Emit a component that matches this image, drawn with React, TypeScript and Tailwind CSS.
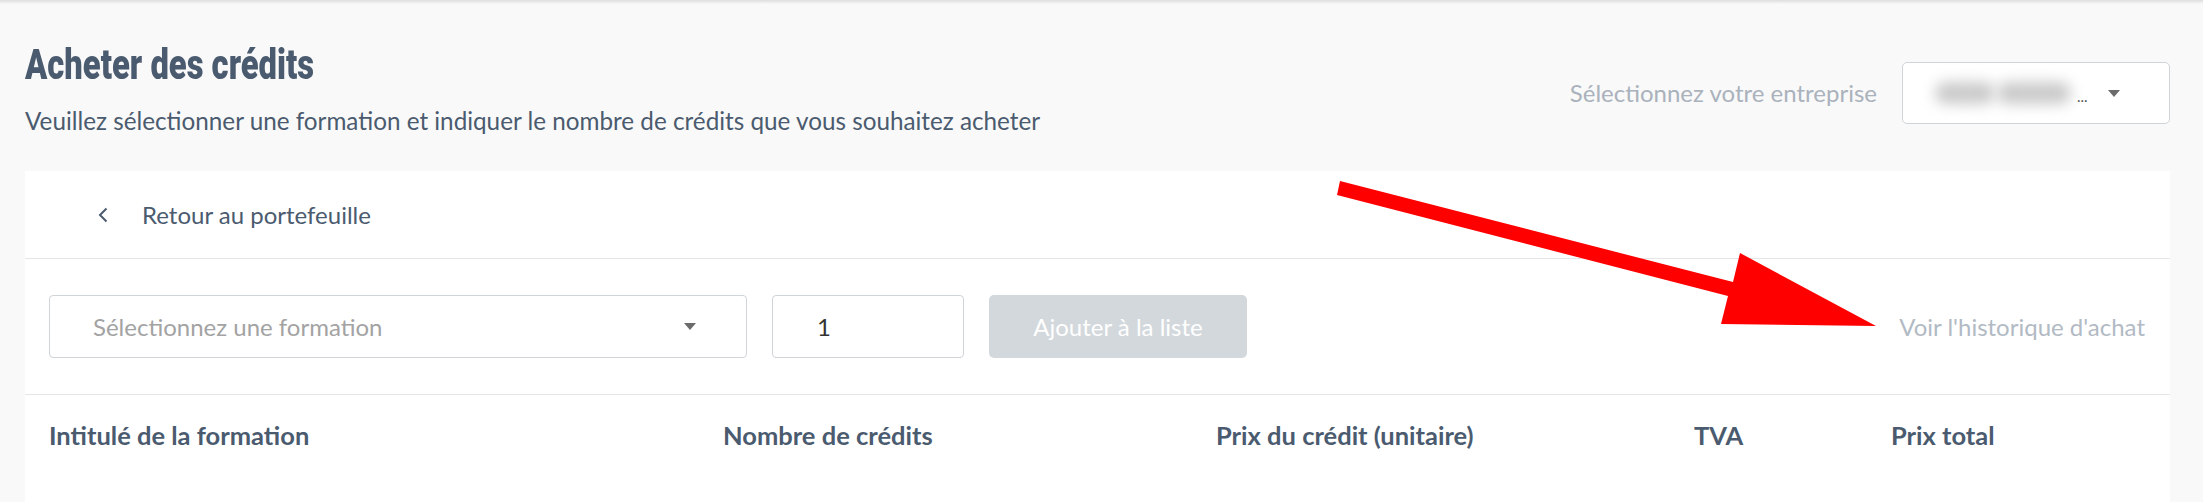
const columns = [
  "Intitulé de la formation",
  "Nombre de crédits",
  "Prix du crédit (unitaire)",
  "TVA",
  "Prix total",
];

const Caret = ({ className }: { className?: string }) => (
  <svg width="12" height="7" viewBox="0 0 12 7" className={className}>
    <polygon points="0,0 12,0 6,7" fill="currentColor" />
  </svg>
);

const CompanySelect = () => (
  <div className="flex items-center gap-[25px] mt-[18px]">
    <span className="font-['Lato',sans-serif] text-[24px] text-[#aab2bc]">
      Sélectionnez votre entreprise
    </span>
    <div className="relative flex items-center w-[268px] h-[62px] bg-white border border-[#d0d5da] rounded-[5px] pl-[32px]">
      {/* blurred company name */}
      <div className="flex items-center gap-[2px] w-[142px]">
        <span className="h-[22px] w-[60px] rounded-full bg-[#cacaca] blur-[7px]" />
        <span className="h-[22px] w-[74px] rounded-full bg-[#cacaca] blur-[7px]" />
      </div>
      <span className="font-['Lato',sans-serif] text-[15px] text-[#555] mt-[6px]">...</span>
      <Caret className="absolute right-[49px] top-[27px] text-[#6b6b6b]" />
    </div>
  </div>
);

const RedArrow = () => (
  <svg
    aria-hidden
    className="pointer-events-none absolute left-0 top-0"
    width="2203"
    height="502"
    viewBox="0 0 2203 502"
  >
    <polygon
      points="1340,181 1733,282 1740,253 1876,326 1721,324 1728,296 1337,195"
      fill="#ff0000"
    />
  </svg>
);

export default function App() {
  return (
    <div className="relative min-h-screen bg-[#f9f9f9] text-[#4a5a6d] overflow-hidden">
      {/* shadow of the top navigation */}
      <div className="h-[4px] bg-gradient-to-b from-[#dedede] to-[#f9f9f9]" />

      <header className="h-[167px] pt-[40px] pl-[25px] pr-[33px] flex justify-between items-start">
        <div>
          <h1 className="origin-left scale-x-[0.78] font-['Roboto',sans-serif] font-black text-[42px] leading-[42px] text-[#4b5b6f] whitespace-nowrap">
            Acheter des crédits
          </h1>
          <p className="mt-[20px] font-['Lato',sans-serif] text-[24.25px] leading-[30px] text-[#4b5b6f]">
            Veuillez sélectionner une formation et indiquer le nombre de crédits que vous souhaitez acheter
          </p>
        </div>
        <CompanySelect />
      </header>

      <main className="ml-[25px] mr-[33px] bg-white min-h-[331px]">
        <div className="h-[88px] flex items-center pl-[73px] border-b border-[#e6e6e6]">
          <svg width="10" height="16" viewBox="0 0 10 16" className="text-[#4b5b6f]">
            <polyline points="8.5,1.5 2,8 8.5,14.5" fill="none" stroke="currentColor" strokeWidth="2" />
          </svg>
          <span className="ml-[34px] font-['Lato',sans-serif] text-[24px] text-[#4b5b6f]">
            Retour au portefeuille
          </span>
        </div>

        <div className="h-[136px] flex items-center pl-[24px] pr-[25px] border-b border-[#e6e6e6]">
          <div className="relative flex items-center w-[698px] h-[63px] border border-[#d0d5da] rounded-[4px] pl-[43px]">
            <span className="font-['Lato',sans-serif] text-[24px] text-[#a3a3a3]">
              Sélectionnez une formation
            </span>
            <Caret className="absolute right-[50px] top-[27px] text-[#6b6b6b]" />
          </div>
          <div className="ml-[25px] flex items-center w-[192px] h-[63px] border border-[#d0d5da] rounded-[4px] pl-[44px]">
            <span className="font-['Lato',sans-serif] text-[24px] text-[#333]">1</span>
          </div>
          <button className="ml-[25px] w-[258px] h-[63px] rounded-[5px] bg-[#d3d8dc] font-['Lato',sans-serif] text-[24px] text-white">
            Ajouter à la liste
          </button>
          <a className="ml-auto font-['Lato',sans-serif] text-[24px] text-[#b2bac4]">
            Voir l'historique d'achat
          </a>
        </div>

        <div className="grid grid-cols-[674px_493px_478px_197px_1fr] pl-[24px] pt-[25px]">
          {columns.map((c) => (
            <div
              key={c}
              className="font-['Lato',sans-serif] font-bold text-[25.5px] leading-[30px] text-[#4b5b6f]"
            >
              {c}
            </div>
          ))}
        </div>
      </main>

      <RedArrow />
    </div>
  );
}
